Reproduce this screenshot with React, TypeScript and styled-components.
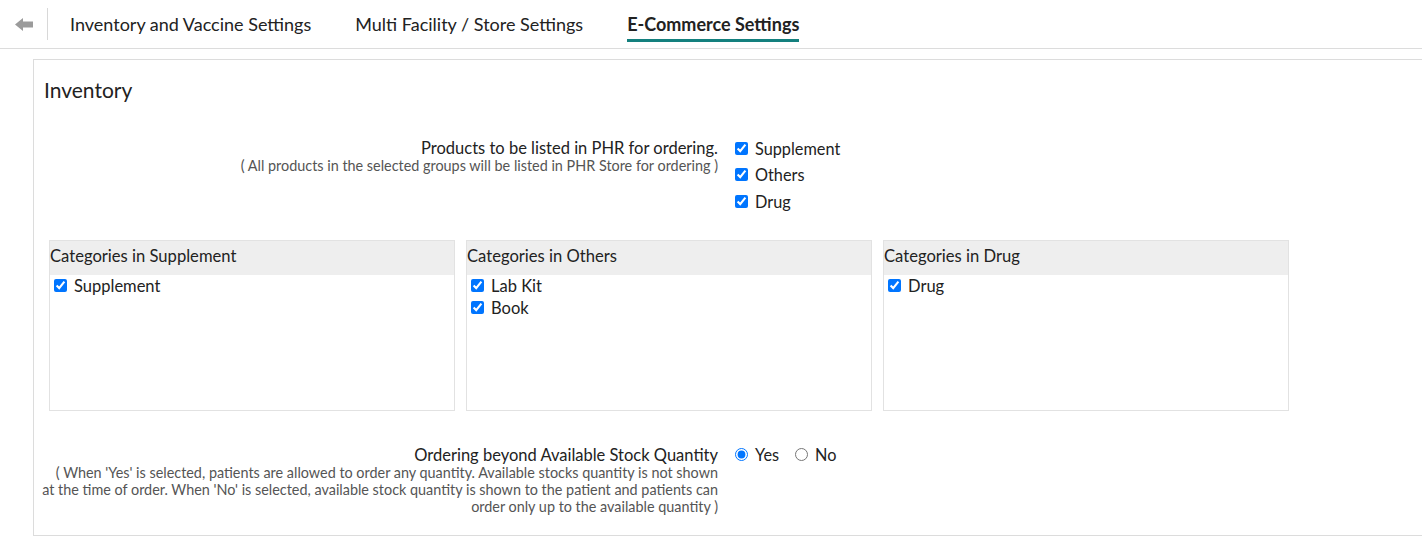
import React from "react";
import styled, { createGlobalStyle } from "styled-components";

const GlobalStyle = createGlobalStyle`
  body {
    margin: 0;
    background: #fff;
    font-family: Lato, "Open Sans", sans-serif;
    color: #222;
  }
`;

const Header = styled.div`
  display: flex;
  align-items: center;
  height: 48px;
  border-bottom: 1px solid #dcdcdc;
`;

const BackButton = styled.button`
  display: flex;
  align-items: center;
  justify-content: flex-start;
  width: 48px;
  height: 32px;
  padding: 0 0 0 15px;
  background: none;
  border: none;
  border-right: 1px solid #d8d8d8;
  cursor: pointer;
  margin-right: 22px;
`;

const Tab = styled.div<{ $active?: boolean }>`
  position: relative;
  font-size: 18px;
  line-height: 48px;
  height: 48px;
  margin-right: 44px;
  color: #222;
  font-weight: ${(p) => (p.$active ? 700 : 400)};

  &::after {
    content: "";
    display: ${(p) => (p.$active ? "block" : "none")};
    position: absolute;
    left: 0;
    right: 0;
    bottom: 6px;
    height: 3px;
    background: #14807e;
  }
`;

const Panel = styled.div`
  margin: 10px 0 0 33px;
  border: 1px solid #dcdcdc;
  border-right: none;
  padding: 16px 0 20px 10px;
`;

const Title = styled.div`
  font-size: 21px;
  line-height: 28px;
  margin-bottom: 35px;
`;

const FormRow = styled.div`
  display: grid;
  grid-template-columns: 674px auto;
  column-gap: 17px;
`;

const LabelCol = styled.div`
  text-align: right;
`;

const LabelText = styled.div`
  font-size: 16.5px;
  line-height: 18px;
`;

const Hint = styled.div`
  font-size: 14.4px;
  line-height: 17px;
  color: #555;
  margin-left: -6px;
  white-space: nowrap;
`;

const Options = styled.div<{ $inline?: boolean }>`
  display: flex;
  flex-direction: ${(p) => (p.$inline ? "row" : "column")};
  gap: ${(p) => (p.$inline ? "16px" : "0")};
  margin-top: ${(p) => (p.$inline ? "0" : "-4px")};
`;

const Option = styled.label<{ $tall?: boolean }>`
  display: flex;
  align-items: center;
  height: ${(p) => (p.$tall ? "26.5px" : "18px")};
  font-size: 16.3px;

  input {
    margin: 0 7px 0 0;
    width: 13px;
    height: 13px;
  }
`;

const Boxes = styled.div`
  display: flex;
  gap: 11px;
  margin: 25px 0 0 5px;
`;

const Box = styled.div`
  width: 406px;
  height: 171px;
  box-sizing: border-box;
  border: 1px solid #e2e2e2;
`;

const BoxHeader = styled.div`
  height: 34px;
  line-height: 30px;
  background: #eeeeee;
  font-size: 16.6px;
`;

const BoxBody = styled.div`
  padding: 0 0 0 4px;
`;

const BoxItem = styled.label`
  display: flex;
  align-items: center;
  height: 22px;
  font-size: 16.5px;

  input {
    margin: 0 7px 0 0;
    width: 13px;
    height: 13px;
  }
`;

const OrderRow = styled(FormRow)`
  margin-top: 35px;
`;

const categories = [
  { name: "Supplement", items: ["Supplement"] },
  { name: "Others", items: ["Lab Kit", "Book"] },
  { name: "Drug", items: ["Drug"] },
];

const BackArrow = () => (
  <svg width="18" height="13" viewBox="0 0 18 13">
    <path d="M0 6.5 L8 0 V3.5 H18 V9.5 H8 V13 Z" fill="#9b9b9b" />
  </svg>
);

export default function App() {
  return (
    <>
      <GlobalStyle />
      <Header>
        <BackButton aria-label="back">
          <BackArrow />
        </BackButton>
        <Tab>Inventory and Vaccine Settings</Tab>
        <Tab>Multi Facility / Store Settings</Tab>
        <Tab $active>E-Commerce Settings</Tab>
      </Header>
      <Panel>
        <Title>Inventory</Title>
        <FormRow>
          <LabelCol>
            <LabelText>Products to be listed in PHR for ordering.</LabelText>
            <Hint>( All products in the selected groups will be listed in PHR Store for ordering )</Hint>
          </LabelCol>
          <Options>
            {["Supplement", "Others", "Drug"].map((g) => (
              <Option key={g} $tall>
                <input type="checkbox" defaultChecked />
                {g}
              </Option>
            ))}
          </Options>
        </FormRow>
        <Boxes>
          {categories.map((c) => (
            <Box key={c.name}>
              <BoxHeader>Categories in {c.name}</BoxHeader>
              <BoxBody>
                {c.items.map((it) => (
                  <BoxItem key={it}>
                    <input type="checkbox" defaultChecked />
                    {it}
                  </BoxItem>
                ))}
              </BoxBody>
            </Box>
          ))}
        </Boxes>
        <OrderRow>
          <LabelCol>
            <LabelText>Ordering beyond Available Stock Quantity</LabelText>
            <Hint>
              ( When 'Yes' is selected, patients are allowed to order any quantity. Available stocks quantity is not shown
              <br />
              at the time of order. When 'No' is selected, available stock quantity is shown to the patient and patients can
              <br />
              order only up to the available quantity )
            </Hint>
          </LabelCol>
          <Options $inline>
            <Option>
              <input type="radio" name="beyond" defaultChecked />
              Yes
            </Option>
            <Option>
              <input type="radio" name="beyond" />
              No
            </Option>
          </Options>
        </OrderRow>
      </Panel>
    </>
  );
}
